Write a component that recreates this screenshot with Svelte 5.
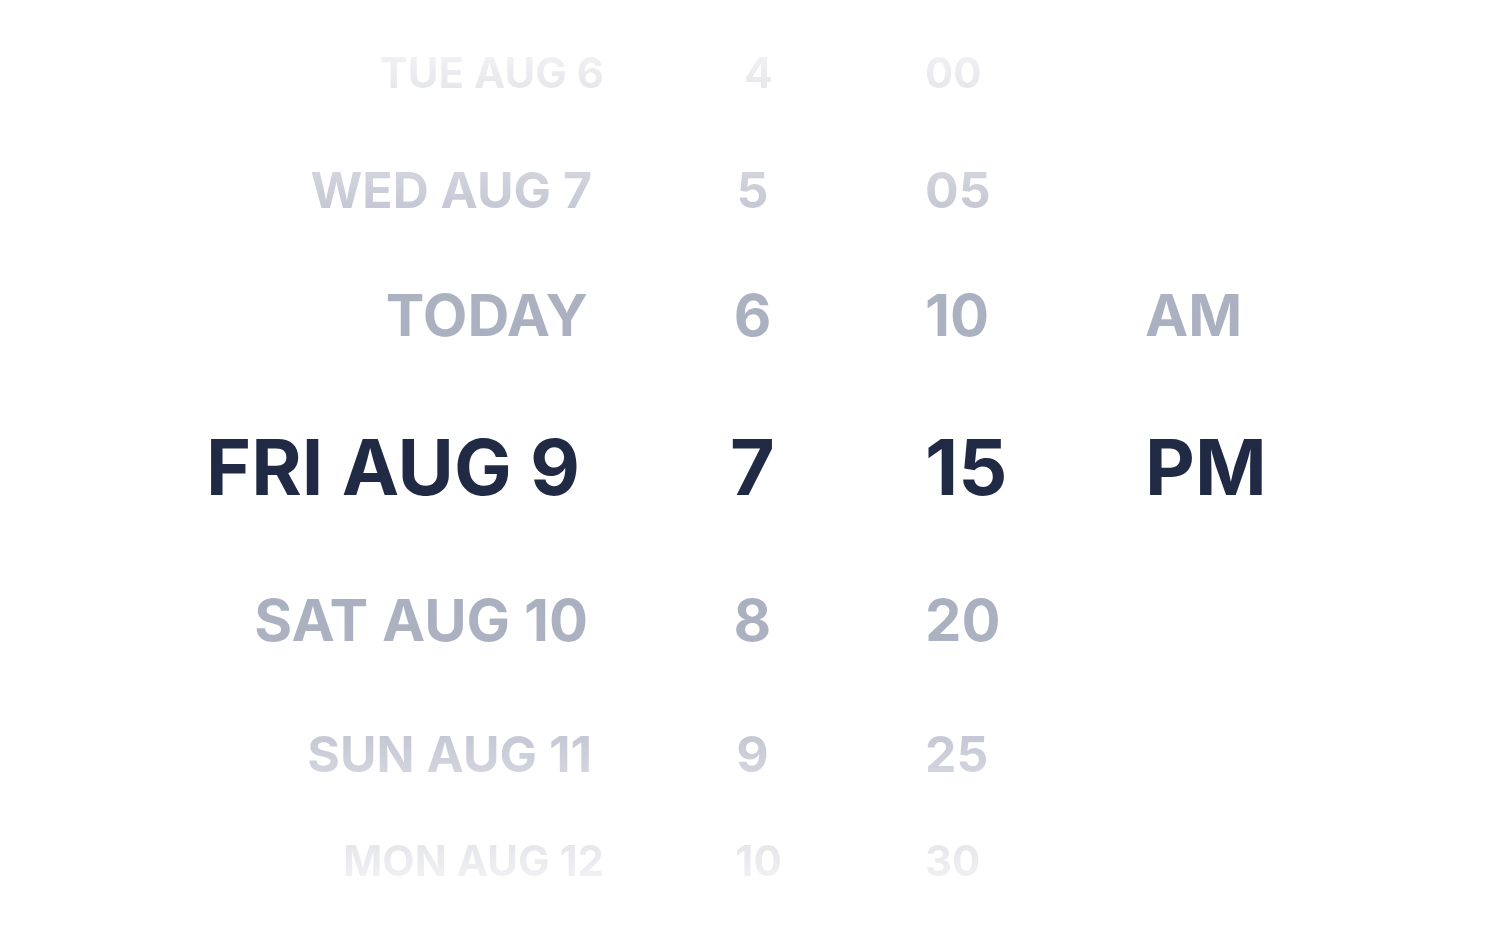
<script>
  const rows = [
    { tier: 'far above', date: 'TUE AUG 6', hour: '4', minute: '00' },
    { tier: 'mid above', date: 'WED AUG 7', hour: '5', minute: '05' },
    { tier: 'near above', date: 'TODAY', hour: '6', minute: '10', period: 'AM' },
    { tier: 'selected', date: 'FRI AUG 9', hour: '7', minute: '15', period: 'PM' },
    { tier: 'near below', date: 'SAT AUG 10', hour: '8', minute: '20' },
    { tier: 'mid below', date: 'SUN AUG 11', hour: '9', minute: '25' },
    { tier: 'far below', date: 'MON AUG 12', hour: '10', minute: '30' }
  ];
</script>

<main class="picker" aria-label="Date and time">
  {#each rows as row}
    <div class="row {row.tier}">
      <span class="date">{row.date}</span>
      <span class="hour">{row.hour}</span>
      <span class="minute">{row.minute}</span>
      {#if row.period}<span class="period">{row.period}</span>{/if}
    </div>
  {/each}
</main>

<style>
  :global(body) {
    margin: 0;
    background: #fff;
  }
  .picker {
    min-height: 100vh;
    box-sizing: border-box;
    display: grid;
    grid-template-rows: 117fr 118fr 131fr 175fr 130fr 138fr 76fr;
    padding: 14px 0 33px;
    font-family: Inter, sans-serif;
    font-weight: 700;
  }
  .row {
    display: grid;
    grid-template-columns: 604fr 321fr 220fr 355fr;
    align-items: center;
    line-height: 1;
    white-space: nowrap;
  }
  .row span {
    color: transparent;
    background: linear-gradient(var(--fade), var(--outer), var(--inner));
    background-clip: text;
    -webkit-background-clip: text;
  }
  .above { --fade: to bottom; }
  .below { --fade: to top; }
  .date { text-align: right; }
  .hour {
    text-align: center;
    padding-right: 24px;
  }

  .selected { --fade: to bottom; --outer: #202a44; --inner: #202a44; font-size: 77px; }
  .near { --outer: #adb2c1; --inner: #a9b0bf; font-size: 58px; }
  .mid { --outer: #d4d6df; --inner: #c3c6d3; font-size: 50px; }
  .far { --outer: #f2f2f5; --inner: #e4e5ea; font-size: 42px; }

  .selected .date { padding-right: 24px; }
  .near .date { padding-right: 16px; }
  .mid .date { padding-right: 12px; }
  .far .hour { padding-right: 12px; }
</style>
